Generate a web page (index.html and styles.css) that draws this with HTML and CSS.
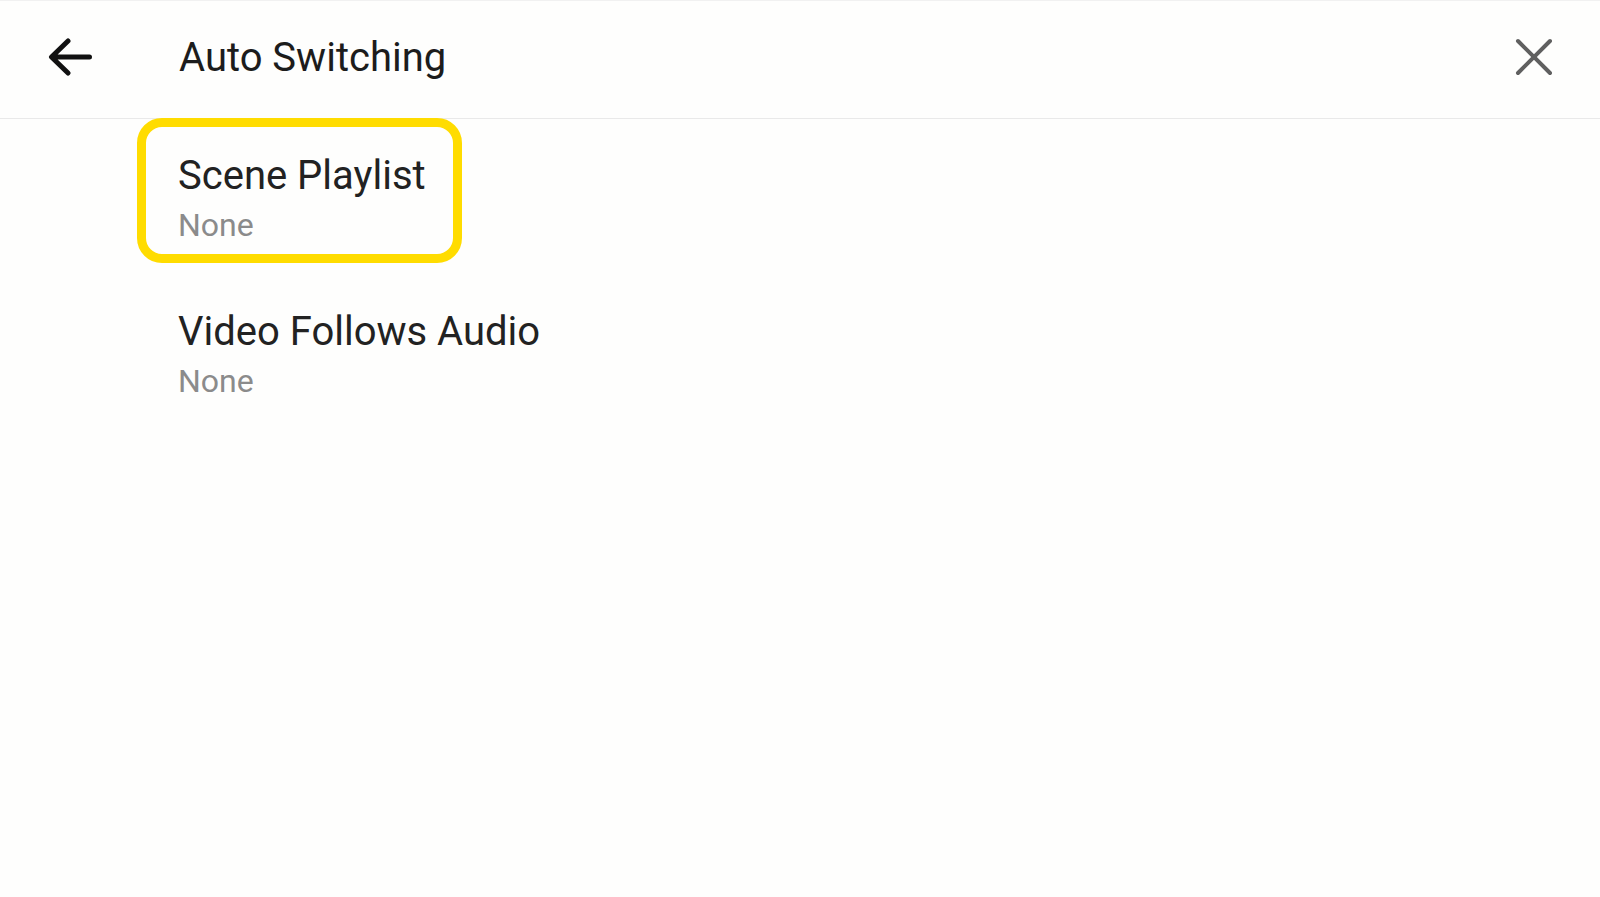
FILE: index.html
```html
<!DOCTYPE html>
<html lang="en">
<head>
<meta charset="utf-8">
<title>Auto Switching</title>
<link rel="stylesheet" href="styles.css">
</head>
<body>
<div class="screen">
  <header class="header">
    <button class="icon-btn back" aria-label="Back">
      <svg width="44" height="38" viewBox="0 0 44 38"><path d="M41.5 19H4 M20 3 L3.5 19 L20 35" fill="none" stroke="#111" stroke-width="5" stroke-linecap="round" stroke-linejoin="round"/></svg>
    </button>
    <h1 class="title">Auto Switching</h1>
    <button class="icon-btn close" aria-label="Close">
      <svg width="38" height="38" viewBox="0 0 38 38"><path d="M3 3 L35 35 M35 3 L3 35" fill="none" stroke="#606060" stroke-width="4" stroke-linecap="round"/></svg>
    </button>
  </header>
  <main class="list">
    <div class="item focused">
      <div class="item-title">Scene Playlist</div>
      <div class="item-sub">None</div>
    </div>
    <div class="item">
      <div class="item-title">Video Follows Audio</div>
      <div class="item-sub">None</div>
    </div>
  </main>
</div>
</body>
</html>
```

FILE: styles.css
```css
html, body {
  margin: 0;
  padding: 0;
  background: #fefefd;
}
body {
  font-family: Roboto, "Liberation Sans", sans-serif;
  width: 1600px;
  height: 897px;
  overflow: hidden;
}
.screen {
  display: flex;
  flex-direction: column;
  height: 897px;
  border-top: 1px solid #f1f1f1;
  box-sizing: border-box;
}
.header {
  display: flex;
  align-items: center;
  height: 117px;
  border-bottom: 1px solid #e9e9e9;
  flex: none;
}
.icon-btn {
  background: none;
  border: 0;
  padding: 0;
  display: flex;
  align-items: center;
  justify-content: center;
}
.back {
  margin-left: 48px;
  margin-bottom: 6px;
  width: 44px;
  height: 38px;
}
.title {
  margin: 0 0 4px 87px;
  font-size: 40px;
  font-weight: 400;
  color: #1c1c1c;
  line-height: 48px;
  flex: 1;
}
.close {
  margin-right: 47px;
  margin-bottom: 6px;
  width: 38px;
  height: 38px;
}
.list {
  display: flex;
  flex-direction: column;
  align-items: flex-start;
  gap: 11px;
  padding-left: 137px;
}
.item {
  box-sizing: border-box;
  height: 145px;
  border: 9px solid transparent;
  border-radius: 25px;
  padding: 25px 27px 0 32px;
}
.item.focused {
  border-color: #ffdc00;
  margin-top: -1px;
}
.item-title {
  font-size: 40px;
  line-height: 48px;
  color: #222;
}
.item-sub {
  margin-top: 6px;
  font-size: 32px;
  line-height: 38px;
  color: #8b8b8b;
}
```
